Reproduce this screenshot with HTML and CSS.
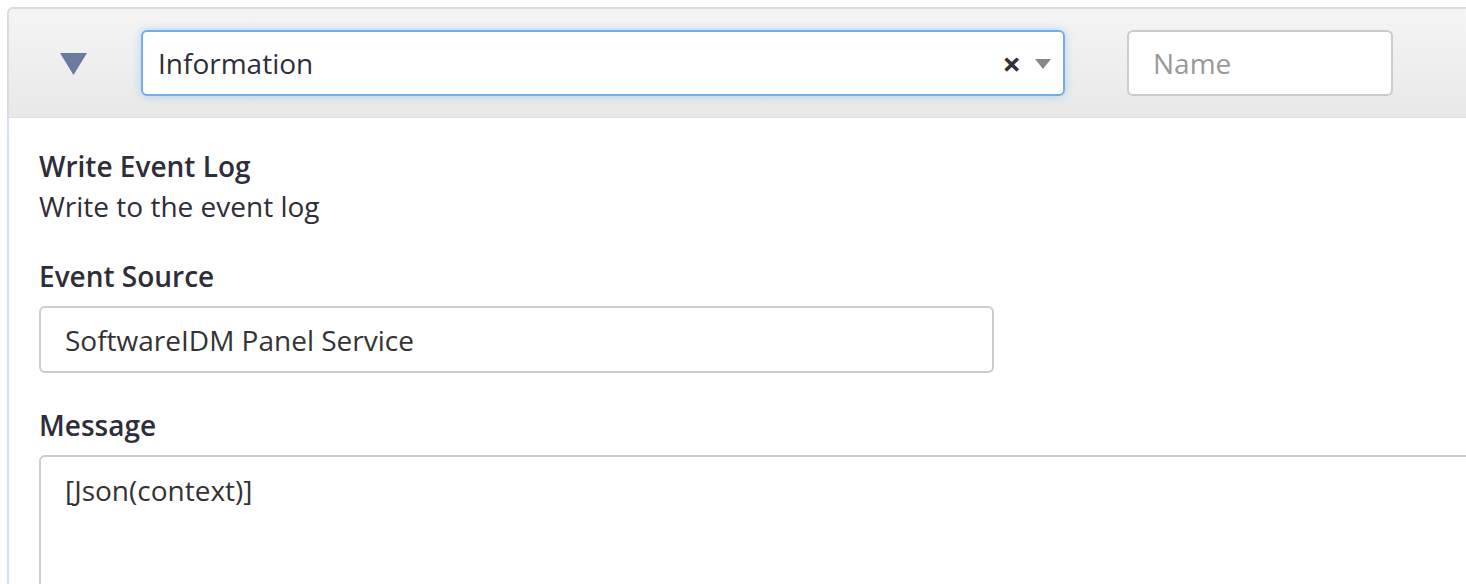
FILE: index.html
```html
<!DOCTYPE html>
<html>
  <head>
    <meta charset="UTF-8" />
    <title>Write Event Log</title>
    <link rel="stylesheet" href="styles.css">
  </head>
  <body>
    <div class="panel">
      <div class="panel-heading">
        <span class="toggle">
          <svg width="27" height="22" viewBox="0 0 27 22"><polygon points="0,0 27,0 13.5,22" fill="#6b7b9f"/></svg>
        </span>
        <div class="select">
          <span class="select-value">Information</span>
          <span class="select-clear">&times;</span>
          <span class="select-arrow"></span>
        </div>
        <input type="text" class="name-input" placeholder="Name" />
      </div>

      <div class="panel-body">
        <div class="step-title">Write Event Log</div>
        <div class="step-desc">Write to the event log</div>

        <label class="field-label" for="source">Event Source</label>
        <input type="text" id="source" class="field-input" value="SoftwareIDM Panel Service" />

        <label class="field-label" for="message">Message</label>
        <textarea id="message" class="field-textarea">[Json(context)]</textarea>
      </div>
    </div>
  </body>
</html>
```

FILE: styles.css
```css
html, body {
  margin: 0;
  padding: 0;
  background-color: #fff;
  overflow: hidden;
}

body {
  font-family: "Open Sans", "Liberation Sans", sans-serif;
  color: #2e2e38;
}

.panel {
  margin: 7px 0 0 7px;
  width: 1600px;
}

.panel-heading {
  display: flex;
  align-items: center;
  height: 111px;
  box-sizing: border-box;
  border: 2px solid #dcdcdc;
  border-bottom: 1px solid #e0e0e0;
  border-radius: 6px 6px 0 0;
  background: linear-gradient(#f5f5f5, #e8e8e8);
}

.toggle {
  display: flex;
  margin-left: 51px;
  margin-top: 2px;
}

.select {
  display: flex;
  align-items: center;
  margin-left: 54px;
  width: 924px;
  height: 66px;
  box-sizing: border-box;
  padding: 0 12px 0 15px;
  background-color: #fff;
  border: 2px solid #74aee8;
  border-radius: 6px;
  box-shadow: 0 0 10px rgba(102, 175, 233, 0.45);
}

.select-value {
  flex: 1;
  font-size: 28px;
}

.select-clear {
  font-size: 33px;
  font-weight: bold;
  color: #333;
  margin-right: 14px;
  line-height: 1;
}

.select-arrow {
  width: 0;
  height: 0;
  border-left: 8px solid transparent;
  border-right: 8px solid transparent;
  border-top: 10px solid #888;
  margin-top: 2px;
}

.name-input {
  margin-left: 62px;
  width: 266px;
  height: 66px;
  box-sizing: border-box;
  padding: 0 24px;
  border: 2px solid #ccc;
  border-radius: 6px;
  font-family: inherit;
  font-size: 28px;
  color: #333;
}

.name-input::placeholder {
  color: #999;
}

.panel-body {
  border-left: 2px solid #d3e2f2;
  padding: 28px 0 0 30px;
  display: flex;
  flex-direction: column;
  align-items: flex-start;
}

.step-title {
  font-size: 28px;
  font-weight: 600;
  line-height: 40px;
}

.step-desc {
  font-size: 28px;
  line-height: 40px;
  margin-bottom: 30px;
}

.field-label {
  font-size: 28px;
  font-weight: 600;
  line-height: 40px;
  margin-bottom: 10px;
}

.field-input {
  width: 955px;
  height: 67px;
  box-sizing: border-box;
  padding: 0 24px;
  border: 2px solid #ccc;
  border-radius: 6px;
  font-family: inherit;
  font-size: 28px;
  color: #333;
  margin-bottom: 32px;
}

.field-textarea {
  width: 1500px;
  height: 200px;
  box-sizing: border-box;
  padding: 14px 24px;
  border: 2px solid #ccc;
  border-radius: 6px;
  font-family: inherit;
  font-size: 28px;
  color: #333;
  resize: none;
}
```
